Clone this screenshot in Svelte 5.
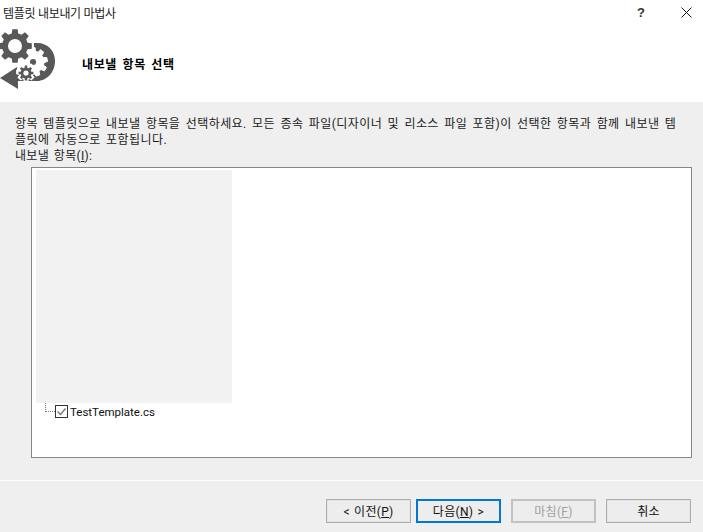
<script lang="ts">
  // builds a toothed wheel centred on cx,cy; the hole is cut with evenodd
  function gear(cx: number, cy: number, outer: number, root: number, hole: number, teeth: number) {
    const pts: string[] = [];
    const step = (Math.PI * 2) / teeth;
    for (let i = 0; i < teeth; i++) {
      const a = i * step - Math.PI / 2;
      const corners: [number, number][] = [
        [a - step * 0.32, root],
        [a - step * 0.2, outer],
        [a + step * 0.2, outer],
        [a + step * 0.32, root],
      ];
      for (const [ang, r] of corners) {
        pts.push(`${(cx + Math.cos(ang) * r).toFixed(2)} ${(cy + Math.sin(ang) * r).toFixed(2)}`);
      }
    }
    const ring = `M${cx - hole} ${cy}a${hole} ${hole} 0 1 0 ${hole * 2} 0a${hole} ${hole} 0 1 0 ${-hole * 2} 0Z`;
    return `M${pts.join("L")}Z${ring}`;
  }

  const buttons = [
    { before: "< 이전(", key: "P", after: ")", kind: "" },
    { before: "다음(", key: "N", after: ") >", kind: "primary" },
    { before: "마침(", key: "F", after: ")", kind: "disabled" },
    { before: "취소", key: "", after: "", kind: "" },
  ];
</script>

<div class="wizard">
  <div class="titlebar">
    <span class="title">템플릿 내보내기 마법사</span>
    <span class="help">?</span>
    <svg class="close" viewBox="0 0 11 11" fill="none" stroke="#111" stroke-width="1">
      <path d="M0.5 0.5l10 10M10.5 0.5l-10 10" />
    </svg>
  </div>

  <div class="header">
    <svg class="logo" viewBox="0 0 56 64" fill="#58585a">
      <path d="M37 15C48 15 55 23 55 33C55 44 47 53 37 53H18V61L0 50L17 39V46H34V15Z" />
      <path d={gear(33, 34, 14.5, 11, 3.2, 9)} fill="#fff" stroke="#fff" stroke-width="1" />
      <circle cx="33" cy="34" r="3" />
      <path d={gear(26, 44, 9, 7, 3, 8)} fill="#fff" stroke="#fff" stroke-width="2" />
      <path d={gear(26, 45, 7.5, 5.5, 2.6, 8)} fill-rule="evenodd" />
      <path d={gear(15, 18, 17, 13, 7, 8)} fill-rule="evenodd" />
    </svg>
    <h1>내보낼 항목 선택</h1>
  </div>

  <div class="body">
    <p class="desc">항목 템플릿으로 내보낼 항목을 선택하세요. 모든 종속 파일(디자이너 및 리소스 파일 포함)이 선택한 항목과 함께 내보낸 템플릿에 자동으로 포함됩니다.</p>
    <div class="label">내보낼 항목(<u>I</u>):</div>
    <div class="tree">
      <div class="blank"></div>
      <div class="node">
        <span class="connector"></span>
        <svg class="check" viewBox="0 0 13 13" fill="none">
          <rect x="0.5" y="0.5" width="12" height="12" fill="#fff" stroke="#333" />
          <path d="M2.5 6.5l3 3 5-6" stroke="#777" stroke-width="1.4" />
        </svg>
        <span class="file">TestTemplate.cs</span>
      </div>
    </div>
  </div>

  <div class="footer">
    {#each buttons as b}
      <button class={b.kind} disabled={b.kind === "disabled"}>
        {b.before}{#if b.key}<u>{b.key}</u>{/if}{b.after}
      </button>
    {/each}
  </div>
</div>

<style>
  :global(body) {
    margin: 0;
    background: #fff;
  }

  .wizard {
    display: flex;
    flex-direction: column;
    width: 703px;
    height: 532px;
    overflow: hidden;
    font-family: Roboto, "Noto Sans CJK KR", "Liberation Sans", sans-serif;
    font-size: 12px;
    color: #1a1a1a;
    background: #f0f0f0;
  }

  .titlebar {
    display: flex;
    align-items: center;
    height: 24px;
    flex-shrink: 0;
    padding: 0 11px 0 3px;
    background: #fff;
  }
  .title {
    flex: 1;
    letter-spacing: -0.3px;
  }
  .help {
    font-family: "Liberation Sans", sans-serif;
    font-size: 13px;
    font-weight: 700;
    color: #333;
    margin-right: 36px;
  }
  .close { width: 11px; height: 11px; }

  .header {
    display: flex;
    align-items: center;
    height: 78px;
    flex-shrink: 0;
    background: #fff;
  }
  .logo {
    width: 56px;
    height: 64px;
    align-self: flex-start;
    margin: 4px 26px 0 0;
  }
  h1 {
    margin: 1px 0 0;
    font-size: 12px;
    font-weight: 700;
    letter-spacing: 0.6px;
    word-spacing: 2px;
    color: #000;
  }

  .body {
    flex: 1;
    display: flex;
    flex-direction: column;
    padding: 14px 11px 0 15px;
    line-height: 16px;
    border-bottom: 1px solid #fff;
    background: #efefef;
  }
  .desc {
    margin: 0;
    width: 668px;
    word-break: break-all;
    letter-spacing: 0.43px;
    word-spacing: 2px;
  }
  .label {
    height: 15px;
    letter-spacing: 0.3px;
    word-spacing: 1.5px;
  }

  .tree {
    box-sizing: content-box;
    width: 655px;
    height: 287px;
    margin: 4px 0 0 16px;
    padding: 2px 0 0 4px;
    border: 1px solid #82878c;
    background: #fff;
  }
  .blank {
    width: 196px;
    height: 233px;
    background: #f2f2f2;
  }
  .node {
    display: flex;
    align-items: center;
    height: 17px;
    padding-left: 9px;
    color: #111;
  }
  .file { font-size: 11.5px; }
  .connector {
    width: 10px;
    height: 9px;
    margin-bottom: 9px;
    box-sizing: border-box;
    border-left: 1px dotted #777;
    border-bottom: 1px dotted #777;
  }
  .check {
    width: 13px;
    height: 13px;
    margin-right: 2px;
  }

  .footer {
    display: flex;
    justify-content: flex-end;
    align-items: flex-start;
    gap: 5px;
    height: 51px;
    flex-shrink: 0;
    box-sizing: border-box;
    padding: 18px 12px 0 0;
    background: #efefef;
  }
  button {
    width: 85px;
    height: 24px;
    padding: 1px 0 0;
    font: inherit;
    line-height: 20px;
    letter-spacing: 0.3px;
    word-spacing: 1px;
    color: #111;
    border: 1px solid #adadad;
    background: #ededed;
    box-shadow: inset 0 0 0 1px #e4e4e4;
  }
  button:nth-child(3) { margin-left: 5px; }
  button:nth-child(4) { margin-left: 5px; }
  .primary {
    border: 2px solid #0078d7;
    box-shadow: none;
  }
  .disabled {
    color: #a0a0a0;
    border: 2px solid #c2c2c2;
    box-shadow: none;
  }
</style>
